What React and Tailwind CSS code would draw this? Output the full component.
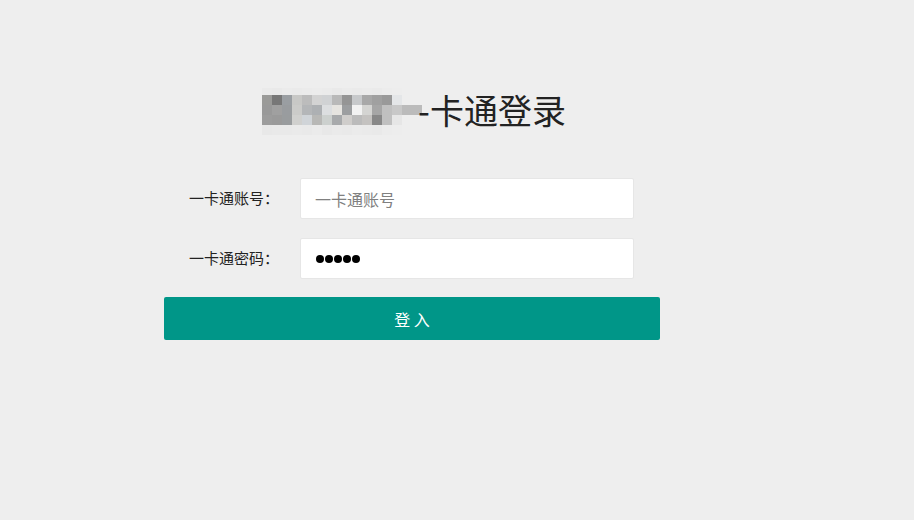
import React from "react";

const rows = [
  { y: 0, h: 7, c: ["#eaeaea", "#e9e9e9", "#ebebeb", "#eaeaea", "#ebebeb", "#ececec", "#ebebeb", "#e9e9e9", "#ebebeb", "#eaeaea", "#ebebeb", "#eaeaea", "#ececec", "#ededed"] },
  { y: 7, h: 10, c: ["#9a9a98", "#777777", "#9a9ea2", "#c8c8c6", "#bcbcbc", "#d3d3d3", "#d0d2d4", "#b9b9b9", "#959595", "#c7c9cb", "#a8a8a8", "#a0a0a0", "#999999", "#e4e6e8"] },
  { y: 17, h: 10, c: ["#999999", "#a0a0a0", "#999c9f", "#cbcbc9", "#b4b6b8", "#adb0b3", "#dcdee0", "#e6e4e0", "#9c9ea0", "#f2f2f2", "#d4d4d2", "#a6a6a6", "#c0c0c0", "#c8c8c8", "#bbbbbb", "#bbbbbb"] },
  { y: 27, h: 10, c: ["#9c9c9c", "#9a9a9a", "#999c9e", "#d0d0ce", "#d0d4d8", "#b8b8b6", "#ccd0ce", "#a8aaac", "#cfcdcb", "#bbbbbb", "#c4c2c0", "#888888", "#c0c0c0", "#e6e6e6"] },
  { y: 37, h: 10, c: ["#e8e8e8", "#e9e9e9", "#e9e9e9", "#eaeaea", "#e9e9e9", "#ebebeb", "#e8e8e8", "#eaeaea", "#e9e9e9", "#ebebeb", "#eaeaea", "#e9e9e9", "#ececec", "#ededed"] },
];

function Mosaic() {
  return (
    <svg width="160" height="47" viewBox="0 0 160 47" className="shrink-0">
      {rows.map((r, ri) =>
        r.c.map((col, ci) => (
          <rect key={ri + "-" + ci} x={ci * 10} y={r.y} width="10" height={r.h} fill={col} />
        ))
      )}
    </svg>
  );
}

export default function App() {
  return (
    <div className="w-full h-[520px] bg-[#eeeeee] font-['Noto_Sans_CJK_SC',sans-serif] text-[#222]">
      <div className="ml-[164px] w-[496px] pt-[88px] flex flex-col">
        <div className="flex justify-center items-start h-[47px] pl-[4px]">
          <Mosaic />
          <span className="text-[34px] leading-[44px] whitespace-nowrap -ml-[4px]">-卡通登录</span>
        </div>

        <div className="mt-[43px] flex items-center h-[41px]">
          <label className="w-[136px] pr-[21px] text-right text-[15px]">一卡通账号：</label>
          <input
            className="w-[334px] h-[41px] bg-white border border-[#e6e6e6] rounded-[2px] pl-[14px] text-base outline-none placeholder:text-[#808080]"
            placeholder="一卡通账号"
          />
        </div>

        <div className="mt-[19px] flex items-center h-[41px]">
          <label className="w-[136px] pr-[21px] text-right text-[15px]">一卡通密码：</label>
          <div className="w-[334px] h-[41px] bg-white border border-[#e6e6e6] rounded-[2px] pl-[15px] flex items-center gap-[1px]">
            <span className="w-2 h-2 rounded-full bg-black" />
            <span className="w-2 h-2 rounded-full bg-black" />
            <span className="w-2 h-2 rounded-full bg-black" />
            <span className="w-2 h-2 rounded-full bg-black" />
            <span className="w-2 h-2 rounded-full bg-black" />
          </div>
        </div>

        <button className="mt-[18px] w-[496px] h-[43px] bg-[#009688] rounded-[2px] text-white text-base">
          登 入
        </button>
      </div>
    </div>
  );
}
